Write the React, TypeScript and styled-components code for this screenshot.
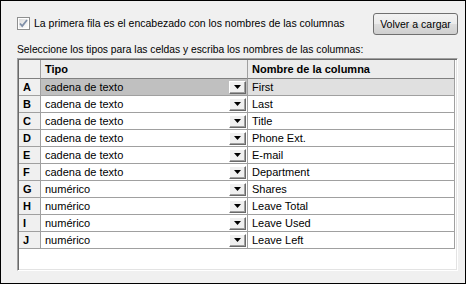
import styled, { createGlobalStyle } from "styled-components";

const Global = createGlobalStyle`
  html, body {
    margin: 0;
    padding: 0;
    background: #f0f0f0;
  }
  body {
    width: 466px;
    height: 284px;
    overflow: hidden;
  }
`;

const Window = styled.div`
  box-sizing: border-box;
  width: 466px;
  height: 284px;
  border: 1px solid #000;
  background: #f0f0f0;
  padding: 12px 7px 0 16px;
  display: flex;
  flex-direction: column;
  font-family: "Liberation Sans", Arial, sans-serif;
  color: #000;
`;

const TopRow = styled.div`
  display: flex;
  align-items: center;
  justify-content: space-between;
  height: 22px;
`;

const CheckLabel = styled.label`
  display: flex;
  align-items: center;
  gap: 4px;
  font-size: 10.5px;
  margin-top: -2px;
`;

const Button = styled.button`
  box-sizing: border-box;
  width: 85px;
  height: 22px;
  padding: 0;
  border: 1px solid #707070;
  border-radius: 3px;
  background: linear-gradient(#f2f2f2 0%, #ebebeb 50%, #dddddd 51%, #cfcfcf 100%);
  font-family: "Liberation Sans", Arial, sans-serif;
  font-size: 10.5px;
  color: #000;
`;

const Hint = styled.div`
  font-size: 10.3px;
  line-height: 13px;
  margin-top: 8px;
`;

const Grid = styled.div`
  box-sizing: border-box;
  width: 441px;
  height: 213px;
  margin-top: 2px;
  background: #fff;
  border-top: 1px solid #a0a0a0;
  border-left: 1px solid #a0a0a0;
  border-right: 1px solid #fff;
  border-bottom: 1px solid #fff;
  box-shadow: inset 1px 1px 0 #696969, inset -1px -1px 0 #e3e3e3;
  padding: 1px 0 0 1px;
  font-size: 11px;
`;

const Row = styled.div<{ $head?: boolean }>`
  display: grid;
  grid-template-columns: 22px 207px 207px;
  height: ${(p) => (p.$head ? "19px" : "17px")};
`;

const Cell = styled.div<{ $bg?: string; $head?: boolean; $bold?: boolean }>`
  box-sizing: border-box;
  display: flex;
  align-items: center;
  padding-left: 4px;
  background: ${(p) => p.$bg || "#fff"};
  border-right: 1px solid #a0a0a0;
  border-bottom: 1px solid ${(p) => (p.$head ? "#808080" : "#a0a0a0")};
  font-weight: ${(p) => (p.$bold ? "bold" : "normal")};
  white-space: nowrap;
  overflow: hidden;
`;

const TypeText = styled.span`
  flex: 1;
`;

const DropButton = styled.span`
  box-sizing: border-box;
  width: 17px;
  height: 13px;
  margin-right: 1px;
  display: flex;
  align-items: center;
  justify-content: center;
  background: #f0f0f0;
  border-top: 1px solid #fff;
  border-left: 1px solid #fff;
  border-right: 1px solid #696969;
  border-bottom: 1px solid #696969;
  box-shadow: inset -1px -1px 0 #a0a0a0;
`;

const CheckBox = () => (
  <svg width="13" height="13" viewBox="0 0 13 13">
    <defs>
      <linearGradient id="cbg" x1="0" y1="0" x2="1" y2="1">
        <stop offset="0" stopColor="#dcdcdc" />
        <stop offset="1" stopColor="#ffffff" />
      </linearGradient>
    </defs>
    <rect x="0.5" y="0.5" width="12" height="12" fill="#fff" stroke="#8e8f8f" />
    <rect x="2" y="2" width="9" height="9" fill="url(#cbg)" />
    <path d="M3 6.5 L5.2 9 L10 3" fill="none" stroke="#7f8fa8" strokeWidth="1.8" />
  </svg>
);

const Arrow = () => (
  <svg width="7" height="4" viewBox="0 0 7 4">
    <polygon points="0,0 7,0 3.5,4" fill="#000" />
  </svg>
);

const rows: [string, string, string][] = [
  ["A", "cadena de texto", "First"],
  ["B", "cadena de texto", "Last"],
  ["C", "cadena de texto", "Title"],
  ["D", "cadena de texto", "Phone Ext."],
  ["E", "cadena de texto", "E-mail"],
  ["F", "cadena de texto", "Department"],
  ["G", "numérico", "Shares"],
  ["H", "numérico", "Leave Total"],
  ["I", "numérico", "Leave Used"],
  ["J", "numérico", "Leave Left"],
];

export default function App() {
  return (
    <Window>
      <Global />
      <TopRow>
        <CheckLabel>
          <CheckBox />
          La primera fila es el encabezado con los nombres de las columnas
        </CheckLabel>
        <Button>Volver a cargar</Button>
      </TopRow>
      <Hint>Seleccione los tipos para las celdas y escriba los nombres de las columnas:</Hint>
      <Grid>
        <Row $head>
          <Cell $head $bg="#f0f0f0" />
          <Cell $head $bold $bg="#ececec">Tipo</Cell>
          <Cell $head $bold $bg="#ececec">Nombre de la columna</Cell>
        </Row>
        {rows.map(([key, type, name], i) => (
          <Row key={key}>
            <Cell $bold $bg="#f0f0f0">{key}</Cell>
            <Cell $bg={i === 0 ? "#c0c0c0" : "#fff"}>
              <TypeText>{type}</TypeText>
              <DropButton>
                <Arrow />
              </DropButton>
            </Cell>
            <Cell $bg={i === 0 ? "#e0e0e0" : "#fff"}>{name}</Cell>
          </Row>
        ))}
      </Grid>
    </Window>
  );
}
